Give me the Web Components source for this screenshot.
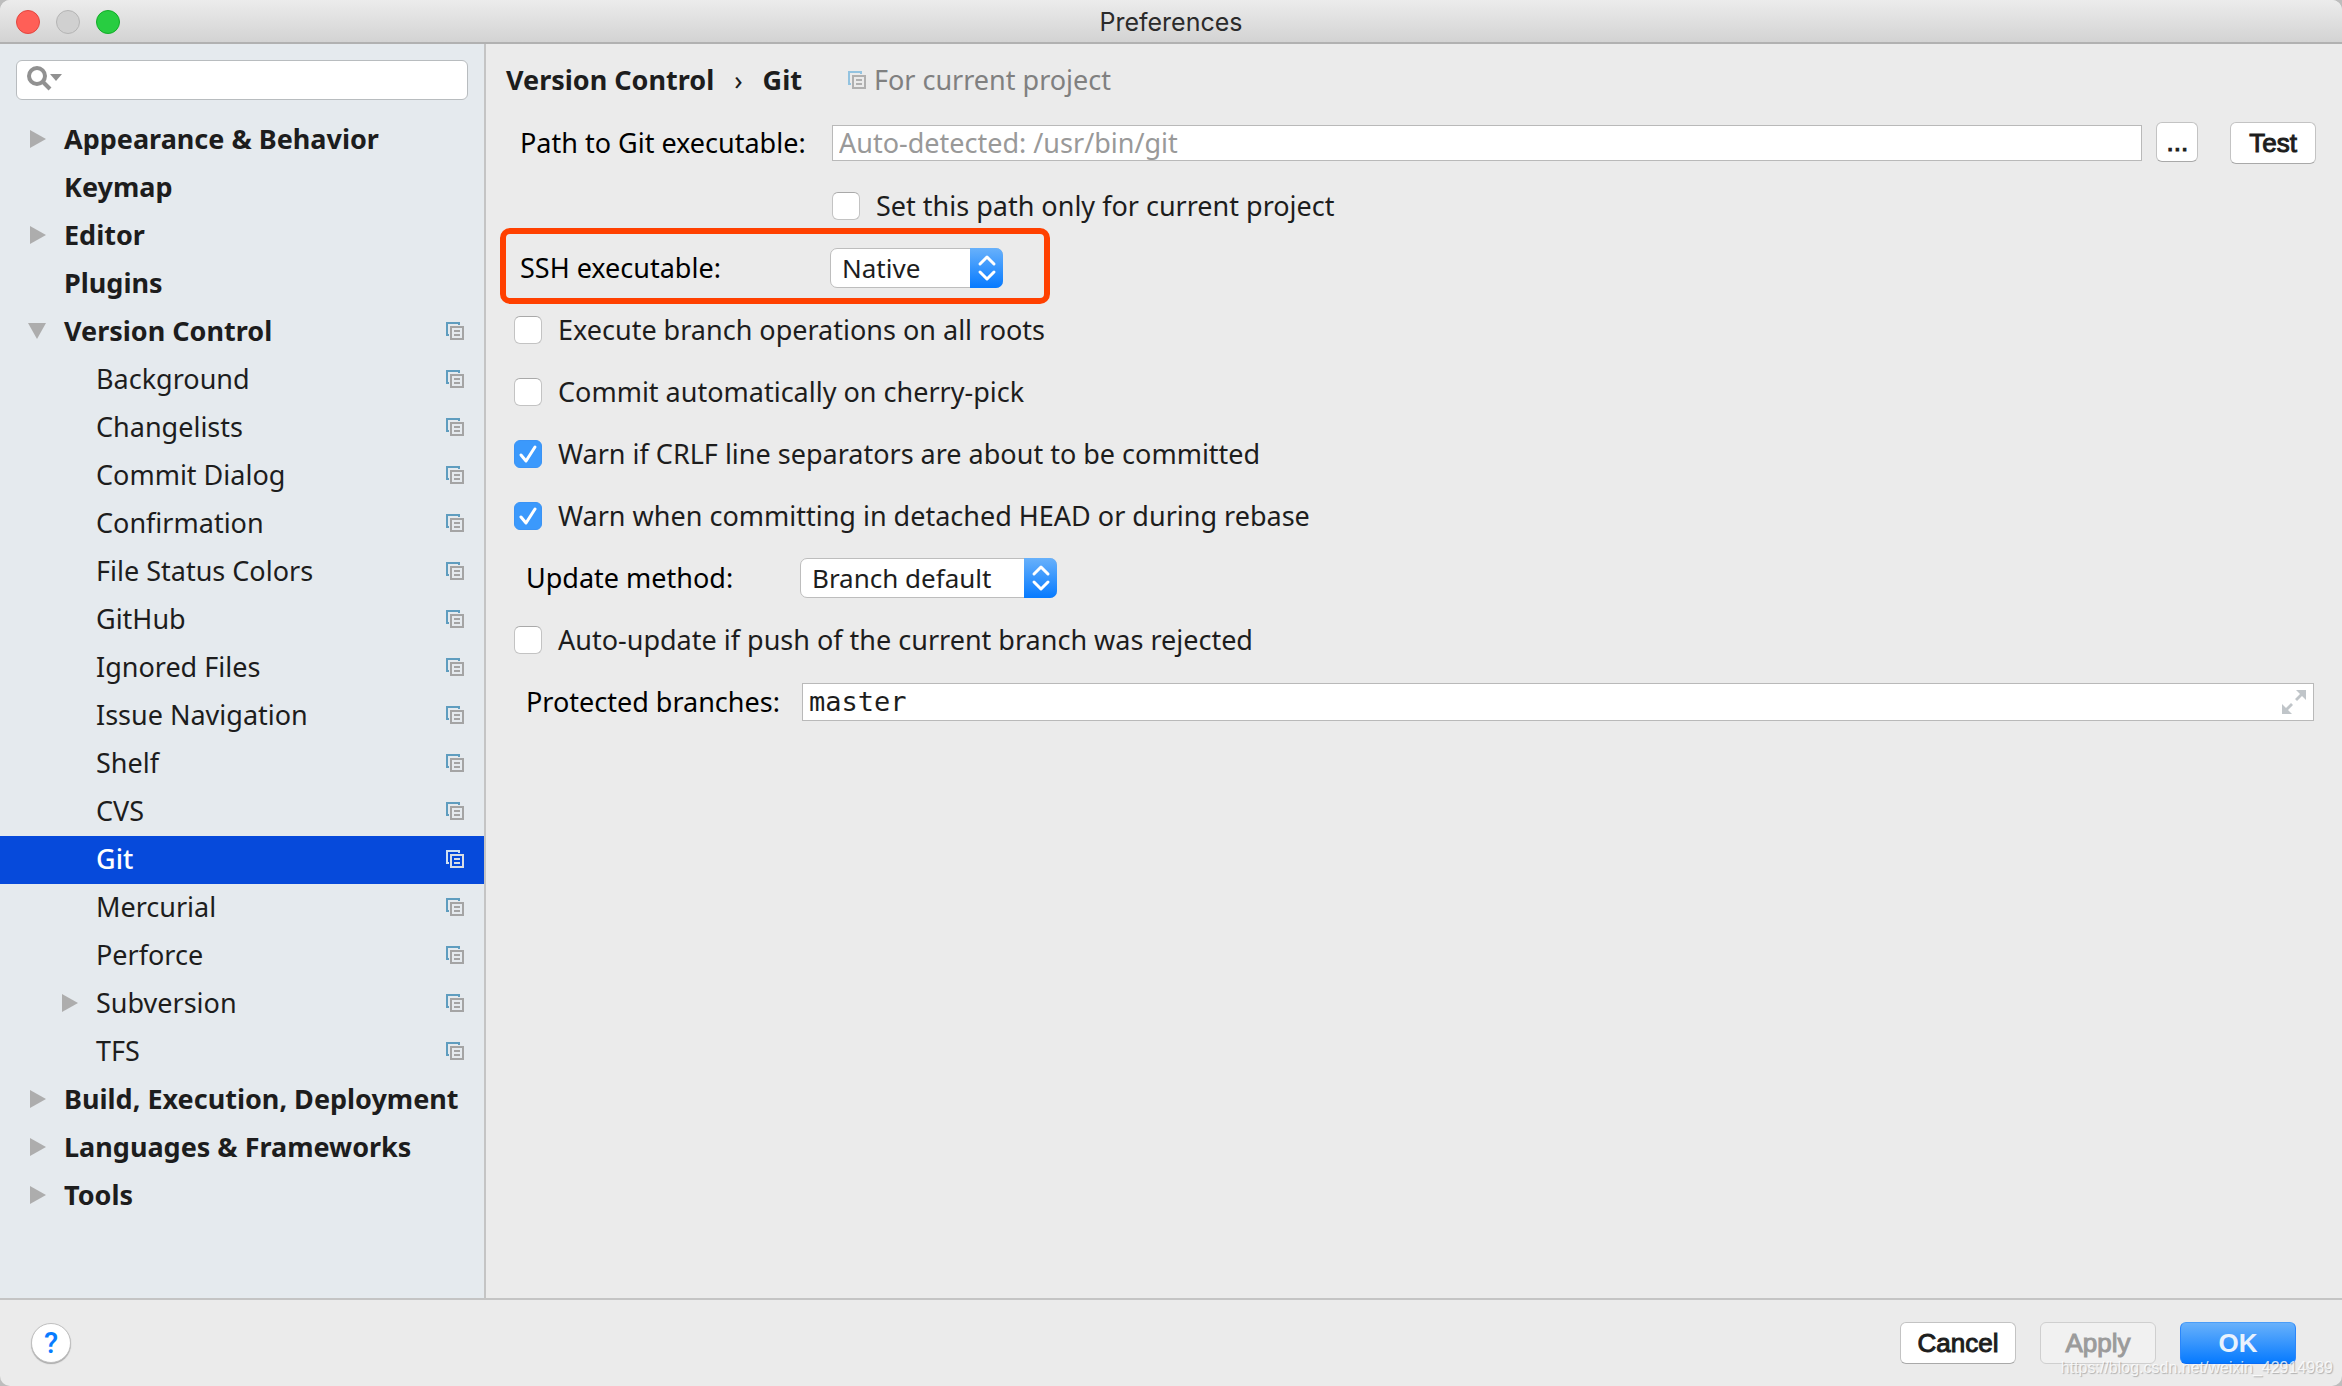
<!DOCTYPE html>
<html lang="en">
<head>
<meta charset="utf-8">
<title>Preferences</title>
<style>
html, body {
    margin: 0;
    height: 100%;
}
body {
    background: #bdbdbd;
    font-family: "Noto Sans", "Open Sans", sans-serif;
    font-size: 27px;
    line-height: 36px;
    color: #1d1d1d;
}
</style>
</head>
<body>

<pref-window heading="Preferences">
    <pref-sidebar slot="sidebar">
        <tree-item bold arrow="closed">Appearance &amp; Behavior</tree-item>
        <tree-item bold>Keymap</tree-item>
        <tree-item bold arrow="closed">Editor</tree-item>
        <tree-item bold>Plugins</tree-item>
        <tree-item bold arrow="open" project>Version Control</tree-item>
        <tree-item child project>Background</tree-item>
        <tree-item child project>Changelists</tree-item>
        <tree-item child project>Commit Dialog</tree-item>
        <tree-item child project>Confirmation</tree-item>
        <tree-item child project>File Status Colors</tree-item>
        <tree-item child project>GitHub</tree-item>
        <tree-item child project>Ignored Files</tree-item>
        <tree-item child project>Issue Navigation</tree-item>
        <tree-item child project>Shelf</tree-item>
        <tree-item child project>CVS</tree-item>
        <tree-item child project selected>Git</tree-item>
        <tree-item child project>Mercurial</tree-item>
        <tree-item child project>Perforce</tree-item>
        <tree-item child project arrow="closed">Subversion</tree-item>
        <tree-item child project>TFS</tree-item>
        <tree-item bold arrow="closed">Build, Execution, Deployment</tree-item>
        <tree-item bold arrow="closed">Languages &amp; Frameworks</tree-item>
        <tree-item bold arrow="closed">Tools</tree-item>
    </pref-sidebar>

    <git-settings></git-settings>

    <help-button slot="help"></help-button>
    <mac-button slot="actions" kind="wide">Cancel</mac-button>
    <mac-button slot="actions" kind="wide" disabled>Apply</mac-button>
    <mac-button slot="actions" kind="wide" primary>OK</mac-button>
    <span slot="watermark">https://blog.csdn.net/weixin_42914989</span>
</pref-window>

<script>
// small helper : attach an open shadow root and fill it
const render = (el, style, html) => {
    el.attachShadow({ mode: "open" });
    el.shadowRoot.innerHTML = `<style>:host, * { box-sizing: border-box; } ${style}</style>${html}`;
};

class PrefWindow extends HTMLElement {
    connectedCallback() {
        render(this, `
            :host {
                display: grid;
                grid-template-rows: auto 1fr auto;
                min-height: 100vh;
                background: #ebebeb;
                border-radius: 10px;
                overflow: hidden;
            }
            header {
                display: grid;
                grid-template-columns: 1fr auto 1fr;
                align-items: center;
                height: 44px;
                padding: 2px 16px 0;
                border-bottom: 2px solid #b1b1b1;
                background: linear-gradient(#ececec, #d3d3d3);
            }
            .lights {
                display: flex;
                gap: 16px;
            }
            .lights button {
                width: 24px;
                height: 24px;
                padding: 0;
                border: 1px solid #e2463f;
                border-radius: 50%;
                background: #ff5f57;
            }
            .lights .min { background: #d0d0d0; border-color: #b4b4b4; }
            .lights .max { background: #28cd41; border-color: #12ac28; }
            h1 {
                margin: 0;
                font: 400 25px/32px Inter, sans-serif;
                color: #2b2b2b;
            }
            .body {
                display: flex;
            }
            ::slotted(git-settings) { flex: 1; }
            footer {
                display: flex;
                align-items: center;
                justify-content: space-between;
                position: relative;
                height: 88px;
                padding: 0 46px 0 31px;
                border-top: 2px solid #c4c4c4;
            }
            .actions {
                display: flex;
                gap: 24px;
            }
            /* printed over the buttons */
            .watermark {
                position: absolute;
                right: 9px;
                bottom: 8px;
                font: 16px/20px "Liberation Sans", sans-serif;
                color: rgba(255, 255, 255, 0.8);
                text-shadow: 1px 1px 1px rgba(0, 0, 0, 0.25);
                pointer-events: none;
            }
        `, /*html*/`
            <header>
                <div class="lights">
                    <button aria-label="Close"></button>
                    <button class="min" aria-label="Minimize"></button>
                    <button class="max" aria-label="Zoom"></button>
                </div>
                <h1>${this.getAttribute("heading")}</h1>
            </header>
            <div class="body">
                <slot name="sidebar"></slot>
                <slot></slot>
            </div>
            <footer>
                <slot name="help"></slot>
                <div class="actions"><slot name="actions"></slot></div>
                <div class="watermark"><slot name="watermark"></slot></div>
            </footer>
        `);
    }
}

class PrefSidebar extends HTMLElement {
    connectedCallback() {
        render(this, `
            :host {
                display: block;
                flex: none;
                width: 486px;
                padding-top: 16px;
                border-right: 2px solid #c4c4c4;
                background: #e5eaee;
            }
            .search {
                display: flex;
                align-items: center;
                height: 40px;
                margin: 0 16px 16px;
                padding: 0 10px;
                border: 1px solid #b8bcbf;
                border-radius: 6px;
                background: #fff;
            }
            svg { flex: none; }
            input {
                flex: 1;
                min-width: 0;
                border: 0;
                outline: 0;
                background: none;
                font: inherit;
            }
        `, /*html*/`
            <div class="search">
                <svg width="36" height="30" viewBox="0 0 36 30">
                    <circle cx="10" cy="11" r="8" fill="none" stroke="#919191" stroke-width="4"/>
                    <path d="M15 16l8 8" stroke="#919191" stroke-width="4"/>
                    <path d="M23 9h12l-6 7z" fill="#919191"/>
                </svg>
                <input type="text" aria-label="Search settings">
            </div>
            <nav aria-label="Settings"><slot></slot></nav>
        `);
    }
}

class TreeItem extends HTMLElement {
    connectedCallback() {
        const arrows = {
            closed: '<path d="M2 0l16 9-16 9z"/>',
            open: '<path d="M0 1h18l-9 16z"/>'
        };
        render(this, `
            :host { display: block; }
            :host([bold]) { font-weight: 700; }
            a {
                display: flex;
                align-items: center;
                height: 48px;
                padding: 0 20px 3px 28px;
                color: #1d1d1d;
                text-decoration: none;
            }
            :host([child]) a { padding-left: 60px; }
            :host([selected]) a {
                background: #064adb;
                color: #fff;
                font-weight: 500;
            }
            .arrow {
                flex: none;
                width: 18px;
                height: 18px;
                margin-right: 18px;
                fill: #adadad;
            }
            .label { flex: 1; white-space: nowrap; }
            :host([selected]) project-icon {
                --back: #cfe0f2;
                --front: #d9dde3;
            }
        `, /*html*/`
            <a href="#">
                <svg class="arrow" viewBox="0 0 18 18">${arrows[this.getAttribute("arrow")] || ""}</svg>
                <span class="label"><slot></slot></span>
                ${this.hasAttribute("project") ? "<project-icon></project-icon>" : ""}
            </a>
        `);
    }
}

// two stacked sheets
class ProjectIcon extends HTMLElement {
    connectedCallback() {
        render(this, `
            :host { display: block; flex: none; }
            svg { display: block; }
            .back { fill: var(--back, #5f9dbf); }
            .front { fill: var(--front, #a4a4a4); }
        `, /*html*/`
            <svg width="18" height="18" viewBox="0 0 18 18" shape-rendering="crispEdges">
                <path class="back" d="M0 0h14v3h-2v-1h-10v10h1v2h-3z"/>
                <path class="front" fill-rule="evenodd" d="M4 4h14v14h-14zM6 6v10h10v-10z"/>
                <path class="front" d="M8 8h6v2h-6zM8 12h6v2h-6z"/>
            </svg>
        `);
    }
}

class MacButton extends HTMLElement {
    connectedCallback() {
        render(this, `
            :host { display: block; flex: none; }
            button {
                display: block;
                height: 42px;
                padding: 0 18px;
                border: 1px solid #c3c3c3;
                border-bottom-color: #a9a9a9;
                border-radius: 6px;
                background: #fff;
                font: 400 26px/38px "Liberation Sans", Arial, sans-serif;
                -webkit-text-stroke: 1px currentColor;
                color: #1d1d1d;
            }
            :host([kind="wide"]) button { width: 116px; padding: 0; }
            :host([kind="small"]) button { width: 42px; height: 40px; padding: 0; }
            button:disabled {
                background: #f1f1f1;
                border-color: #cfcfcf;
                color: #9b9b9b;
            }
            :host([primary]) button {
                border-color: #4a9df8 #2a86fb #0a6cf5;
                background: linear-gradient(#68b1fb, #067aff);
                font-weight: 700;
                -webkit-text-stroke: 0;
                color: #e9f2fd;
            }
        `, `<button ${this.hasAttribute("disabled") ? "disabled" : ""}><slot></slot></button>`);
    }
}

class HelpButton extends HTMLElement {
    connectedCallback() {
        render(this, `
            :host { display: block; }
            button {
                display: block;
                width: 40px;
                height: 40px;
                padding: 0;
                border: 1px solid #c0c0c0;
                border-radius: 50%;
                background: #fff;
                box-shadow: 0 1px 1px #a9a9a9;
                font: 500 29px/36px Roboto, sans-serif;
                color: #087cff;
            }
        `, `<button>?</button>`);
    }
}

class PrefCheck extends HTMLElement {
    connectedCallback() {
        render(this, `
            :host { display: block; }
            label {
                display: flex;
                align-items: center;
                gap: 16px;
                height: 62px;
            }
            .box { display: grid; }
            .box > * { grid-area: 1 / 1; }
            input {
                appearance: none;
                width: 28px;
                height: 28px;
                margin: 0;
                border: 1px solid #c3c3c3;
                border-top-color: #a9a9a9;
                border-radius: 6px;
                background: #fff;
            }
            input:checked {
                border-color: #3a93f5;
                background: #3b99fc;
            }
            svg { visibility: hidden; pointer-events: none; }
            input:checked + svg { visibility: visible; }
        `, /*html*/`
            <label>
                <span class="box">
                    <input type="checkbox" ${this.hasAttribute("checked") ? "checked" : ""}>
                    <svg width="28" height="28" viewBox="0 0 28 28">
                        <path d="M7 15l5 6 9-14" fill="none" stroke="#fff" stroke-width="3" stroke-linecap="round" stroke-linejoin="round"/>
                    </svg>
                </span>
                <span><slot></slot></span>
            </label>
        `);
    }
}

const fieldStyle = `
    :host {
        display: flex;
        align-items: center;
        height: 62px;
    }
    label {
        flex: none;
        width: var(--label-width);
        color: #000;
    }
`;

class PrefSelect extends HTMLElement {
    connectedCallback() {
        render(this, `
            ${fieldStyle}
            .select {
                display: grid;
                grid-template-columns: 1fr 33px;
                width: var(--select-width);
                height: 40px;
            }
            select {
                grid-area: 1 / 1 / 2 / 3;
                appearance: none;
                min-width: 0;
                margin: 0;
                padding: 0 33px 0 11px;
                border: 1px solid #bdbdbd;
                border-radius: 7px;
                background: #fff;
                font: inherit;
                font-size: 26px;
                color: #1d1d1d;
            }
            .stepper {
                grid-area: 1 / 2;
                border-radius: 0 7px 7px 0;
                background: linear-gradient(#68b1fb, #067aff);
                pointer-events: none;
            }
        `, /*html*/`
            <label for="field">${this.getAttribute("label")}</label>
            <div class="select">
                <select id="field"><option>${this.getAttribute("value")}</option></select>
                <svg class="stepper" width="33" height="40" viewBox="0 0 33 40">
                    <path d="M10 16l7-7 7 7M10 24l7 7 7-7" fill="none" stroke="#fff" stroke-width="3" stroke-linecap="round" stroke-linejoin="round"/>
                </svg>
            </div>
        `);
    }
}

class PrefText extends HTMLElement {
    connectedCallback() {
        const expand = /*html*/`
            <svg width="24" height="24" viewBox="0 0 24 24" fill="#c0c5c9">
                <path d="M14 0h10v10l-4-4-5 5-2-2 5-5z"/>
                <path d="M0 14v10h10l-4-4 5-5-2-2-5 5z"/>
            </svg>`;
        render(this, `
            ${fieldStyle}
            .box {
                display: flex;
                flex: 1;
                align-items: center;
                height: 36px;
                margin-left: 2px;
                padding: 0 7px 0 6px;
                border: 1px solid #b9b9b9;
                background: #fff;
            }
            :host([mono]) .box { height: 38px; }
            input {
                flex: 1;
                min-width: 0;
                padding: 0;
                border: 0;
                outline: 0;
                background: none;
                font: inherit;
                color: #1d1d1d;
            }
            input::placeholder { color: #999; opacity: 1; }
            :host([mono]) input { font-family: "DejaVu Sans Mono", monospace; }
            .after {
                display: flex;
                gap: 32px;
            }
            ::slotted(:first-child) { margin-left: 14px; }
        `, /*html*/`
            <label for="field">${this.getAttribute("label")}</label>
            <div class="box">
                <input id="field" type="text" value="${this.getAttribute("value") || ""}" placeholder="${this.getAttribute("placeholder") || ""}">
                ${this.hasAttribute("expand") ? expand : ""}
            </div>
            <div class="after"><slot></slot></div>
        `);
    }
}

// red frame drawn around a row
class MarkedRow extends HTMLElement {
    connectedCallback() {
        render(this, `
            :host {
                display: block;
                position: relative;
                width: fit-content;
            }
            :host::after {
                content: "";
                position: absolute;
                inset: -9px -47px -5px -20px;
                border: 6px solid #ff4000;
                border-radius: 10px;
                pointer-events: none;
            }
        `, `<slot></slot>`);
    }
}

class GitSettings extends HTMLElement {
    connectedCallback() {
        render(this, `
            :host {
                display: block;
                padding: 18px 26px 0 28px;
            }
            .crumbs {
                display: flex;
                align-items: center;
                height: 51px;
                padding: 0 0 15px 0;
                margin-left: -8px;
            }
            h2 {
                display: flex;
                gap: 20px;
                margin: 0 46px 0 0;
                font-size: inherit;
            }
            .sep { font-weight: 400; }
            .scope {
                display: flex;
                align-items: center;
                gap: 8px;
                color: #808080;
            }
            .scope project-icon { --back: #93c3e0; --front: #b0b0b0; }
            .ssh {
                padding-left: 6px;
                --label-width: 310px;
            }
            .ssh pref-text { padding-bottom: 2px; }
            .indent { padding-left: 312px; }
            .update {
                padding-left: 12px;
                padding-right: 2px;
                --label-width: 274px;
            }
        `, /*html*/`
            <div class="crumbs">
                <h2><span>Version Control</span><span class="sep">›</span><span>Git</span></h2>
                <span class="scope"><project-icon></project-icon>For current project</span>
            </div>
            <div class="ssh">
                <pref-text label="Path to Git executable:" placeholder="Auto-detected: /usr/bin/git">
                    <mac-button kind="small">...</mac-button>
                    <mac-button>Test</mac-button>
                </pref-text>
                <pref-check class="indent">Set this path only for current project</pref-check>
                <marked-row>
                    <pref-select label="SSH executable:" value="Native" style="--select-width: 173px"></pref-select>
                </marked-row>
            </div>
            <pref-check>Execute branch operations on all roots</pref-check>
            <pref-check>Commit automatically on cherry-pick</pref-check>
            <pref-check checked>Warn if CRLF line separators are about to be committed</pref-check>
            <pref-check checked>Warn when committing in detached HEAD or during rebase</pref-check>
            <div class="update">
                <pref-select label="Update method:" value="Branch default" style="--select-width: 257px"></pref-select>
            </div>
            <pref-check>Auto-update if push of the current branch was rejected</pref-check>
            <div class="update">
                <pref-text mono expand label="Protected branches:" value="master"></pref-text>
            </div>
        `);
    }
}

customElements.define("project-icon", ProjectIcon);
customElements.define("mac-button", MacButton);
customElements.define("help-button", HelpButton);
customElements.define("pref-check", PrefCheck);
customElements.define("pref-select", PrefSelect);
customElements.define("pref-text", PrefText);
customElements.define("marked-row", MarkedRow);
customElements.define("tree-item", TreeItem);
customElements.define("pref-sidebar", PrefSidebar);
customElements.define("git-settings", GitSettings);
customElements.define("pref-window", PrefWindow);
</script>
</body>
</html>
